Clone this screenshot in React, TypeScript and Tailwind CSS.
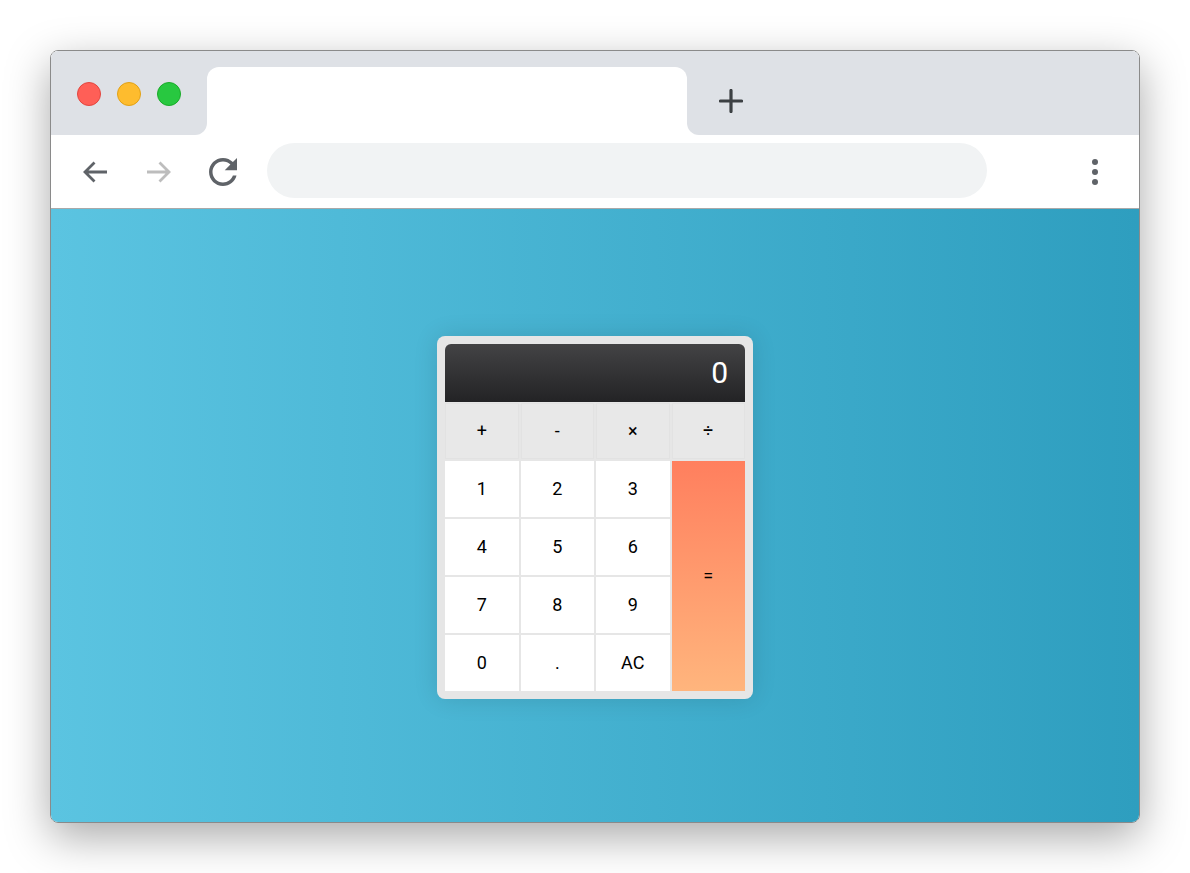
import React from "react";

function BackIcon({ color }: { color: string }) {
  return (
    <svg width="26" height="24" viewBox="0 0 26 24" fill="none">
      <path d="M25 12H3M12.5 2.5L3 12l9.5 9.5" stroke={color} strokeWidth="2.8" />
    </svg>
  );
}

function ForwardIcon({ color }: { color: string }) {
  return (
    <svg width="26" height="24" viewBox="0 0 26 24" fill="none">
      <path d="M1 12h22M13.5 2.5L23 12l-9.5 9.5" stroke={color} strokeWidth="2.8" />
    </svg>
  );
}

function ReloadIcon() {
  return (
    <svg width="28" height="28" viewBox="4 4 16 16" fill="#5f6368">
      <path d="M17.65 6.35C16.2 4.9 14.21 4 12 4c-4.42 0-7.99 3.58-7.99 8s3.57 8 7.99 8c3.730 0 6.84-2.55 7.73-6h-2.08c-.82 2.33-3.04 4-5.65 4-3.31 0-6-2.690-6-6s2.69-6 6-6c1.66 0 3.14.69 4.22 1.78L13 11h7V4l-2.35 2.35z" />
    </svg>
  );
}

const ops = ["+", "-", "×", "÷"];
const digits = ["1", "2", "3", "4", "5", "6", "7", "8", "9", "0", ".", "AC"];

export default function App() {
  return (
    <div className="w-[1190px] h-[873px] bg-white pt-[50px] pl-[50px]">
      <div className="w-[1090px] h-[773px] rounded-[8px] border border-[#8a8a8a] overflow-hidden flex flex-col shadow-[0_14px_44px_rgba(0,0,0,0.34)]">
        {/* Tab strip */}
        <div className="h-[84px] flex bg-white">
          <div className="w-[156px] bg-[#dee1e6] rounded-br-[12px] flex items-center pl-[26px] gap-4 pt-[2px]">
            <span className="w-6 h-6 rounded-full bg-[#ff5f57] border border-[#e2463f]" />
            <span className="w-6 h-6 rounded-full bg-[#febc2e] border border-[#e1a116]" />
            <span className="w-6 h-6 rounded-full bg-[#28c840] border border-[#1aab29]" />
          </div>
          <div className="w-[480px] bg-[#dee1e6] flex flex-col">
            <div className="mt-[16px] flex-1 bg-white rounded-t-[12px]" />
          </div>
          <div className="flex-1 bg-[#dee1e6] rounded-bl-[12px] pl-[32px] pt-[38px]">
            <svg width="24" height="24" viewBox="0 0 24 24">
              <path d="M12 1.5v21M1.5 12h21" stroke="#3c4043" strokeWidth="3.2" strokeLinecap="round" />
            </svg>
          </div>
        </div>

        {/* Toolbar */}
        <div className="h-[74px] bg-white border-b border-[#a9a9a9] flex items-center pl-[31px]">
          <BackIcon color="#5f6368" />
          <div className="ml-[38px]">
            <ForwardIcon color="#bdbdbd" />
          </div>
          <div className="ml-[37px]">
            <ReloadIcon />
          </div>
          <div className="ml-[30px] w-[720px] h-[55px] rounded-full bg-[#f1f3f4] -mt-[3px]" />
          <div className="ml-[105px] flex flex-col gap-[4px]">
            <span className="w-[6px] h-[6px] rounded-full bg-[#5f6368]" />
            <span className="w-[6px] h-[6px] rounded-full bg-[#5f6368]" />
            <span className="w-[6px] h-[6px] rounded-full bg-[#5f6368]" />
          </div>
        </div>

        {/* Page content */}
        <div className="flex-1 bg-[linear-gradient(to_right,#5bc4e1,#2e9ebf)] flex items-center justify-center pt-[3px]">
          <div className="w-[316px] p-2 bg-[#e6e6e6] rounded-lg shadow-[0_0_24px_rgba(0,0,0,0.12)] font-['Roboto',sans-serif]">
            <div className="h-[58px] rounded-t-[6px] bg-[linear-gradient(to_bottom,#434345,#232325)] flex items-center justify-end pr-[17px] text-white text-[30px]">
              0
            </div>
            <div className="grid grid-cols-4 gap-[2px] pt-[1px] auto-rows-[56px]">
              {ops.map((o) => (
                <div key={o} className="bg-[#e8e8e8] border border-[#e2e2e2] flex items-center justify-center text-[18px] text-black">
                  {o}
                </div>
              ))}
              {digits.slice(0, 3).map((d) => (
                <div key={d} className="bg-white flex items-center justify-center text-[18px] text-black">
                  {d}
                </div>
              ))}
              <div className="row-span-4 bg-[linear-gradient(to_bottom,#ff7f5e,#ffb57d)] flex items-center justify-center text-[18px] text-black">
                =
              </div>
              {digits.slice(3).map((d) => (
                <div key={d} className="bg-white flex items-center justify-center text-[18px] text-black">
                  {d}
                </div>
              ))}
            </div>
          </div>
        </div>
      </div>
    </div>
  );
}
